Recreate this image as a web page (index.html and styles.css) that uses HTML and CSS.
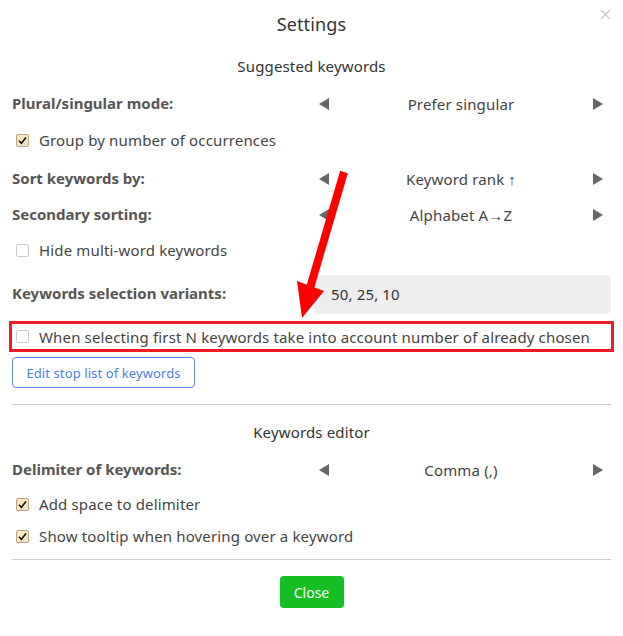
FILE: index.html
```html
<!DOCTYPE html>
<html lang="en">
<head>
    <meta charset="UTF-8">
    <meta name="viewport" content="width=device-width, initial-scale=1.0">
    <title>Settings</title>
    <link rel="stylesheet" href="styles.css">
</head>
<body>
    <div id="settings-modal">
        <div class="modal-header">
            <h1>Settings</h1>
            <span class="close-x">
                <svg width="11" height="11" viewBox="0 0 11 11"><path d="M1 1L10 10M10 1L1 10" stroke="#c8c8c8" stroke-width="1.4"/></svg>
            </span>
        </div>

        <h2 class="section-title">Suggested keywords</h2>

        <div class="select-row first">
            <span class="row-label">Plural/singular mode:</span>
            <div class="switcher">
                <svg class="tri" width="10" height="12" viewBox="0 0 10 12"><polygon points="10,0 10,12 0,6" fill="#666"/></svg>
                <span class="switcher-value">Prefer singular</span>
                <svg class="tri" width="10" height="12" viewBox="0 0 10 12"><polygon points="0,0 0,12 10,6" fill="#666"/></svg>
            </div>
        </div>

        <label class="check-row group-row">
            <span class="box checked"><svg width="9" height="9" viewBox="0 0 9 9"><path d="M1 4.8L3.4 7.2L8 1.6" stroke="#111" stroke-width="1.6" fill="none"/></svg></span>
            Group by number of occurrences
        </label>

        <div class="select-row sort-row">
            <span class="row-label">Sort keywords by:</span>
            <div class="switcher">
                <svg class="tri" width="10" height="12" viewBox="0 0 10 12"><polygon points="10,0 10,12 0,6" fill="#666"/></svg>
                <span class="switcher-value">Keyword rank ↑</span>
                <svg class="tri" width="10" height="12" viewBox="0 0 10 12"><polygon points="0,0 0,12 10,6" fill="#666"/></svg>
            </div>
        </div>

        <div class="select-row">
            <span class="row-label">Secondary sorting:</span>
            <div class="switcher">
                <svg class="tri" width="10" height="12" viewBox="0 0 10 12"><polygon points="10,0 10,12 0,6" fill="#666"/></svg>
                <span class="switcher-value">Alphabet A→Z</span>
                <svg class="tri" width="10" height="12" viewBox="0 0 10 12"><polygon points="0,0 0,12 10,6" fill="#666"/></svg>
            </div>
        </div>

        <label class="check-row hide-row">
            <span class="box"></span>
            Hide multi-word keywords
        </label>

        <div class="input-row">
            <span class="row-label">Keywords selection variants:</span>
            <div class="text-field">50, 25, 10</div>
        </div>

        <label class="check-row highlighted">
            <span class="box"></span>
            When selecting first N keywords take into account number of already chosen
        </label>

        <div class="stop-list">
            <button type="button" class="outline-btn">Edit stop list of keywords</button>
        </div>

        <hr class="divider">

        <h2 class="section-title editor-title">Keywords editor</h2>

        <div class="select-row first">
            <span class="row-label">Delimiter of keywords:</span>
            <div class="switcher">
                <svg class="tri" width="10" height="12" viewBox="0 0 10 12"><polygon points="10,0 10,12 0,6" fill="#666"/></svg>
                <span class="switcher-value">Comma (,)</span>
                <svg class="tri" width="10" height="12" viewBox="0 0 10 12"><polygon points="0,0 0,12 10,6" fill="#666"/></svg>
            </div>
        </div>

        <label class="check-row">
            <span class="box checked"><svg width="9" height="9" viewBox="0 0 9 9"><path d="M1 4.8L3.4 7.2L8 1.6" stroke="#111" stroke-width="1.6" fill="none"/></svg></span>
            Add space to delimiter
        </label>

        <label class="check-row">
            <span class="box checked"><svg width="9" height="9" viewBox="0 0 9 9"><path d="M1 4.8L3.4 7.2L8 1.6" stroke="#111" stroke-width="1.6" fill="none"/></svg></span>
            Show tooltip when hovering over a keyword
        </label>

        <hr class="divider bottom">

        <div class="modal-footer">
            <button type="button" class="close-btn">Close</button>
        </div>

        <!-- annotation arrow drawn over the dialog -->
        <svg class="annotation-arrow" width="623" height="636" viewBox="0 0 623 636">
            <line x1="344" y1="172" x2="310" y2="288" stroke="#ff0000" stroke-width="8"/>
            <polygon points="297,281 324,291 302,318" fill="#ff0000"/>
        </svg>
    </div>
</body>
</html>
```

FILE: styles.css
```css
body {
    margin: 0;
    padding: 0;
    background-color: #fff;
    font-family: 'Noto Sans', 'Open Sans', sans-serif;
    font-size: 15px;
    letter-spacing: 0.15px;
    color: #444;
}

#settings-modal {
    position: relative;
    width: 623px;
    height: 636px;
    padding: 0 12px;
    box-sizing: border-box;
    display: flex;
    flex-direction: column;
}

.modal-header {
    position: relative;
    height: 48px;
    display: flex;
    justify-content: center;
    align-items: center;
}

.modal-header h1 {
    margin: 0;
    font-size: 18px;
    font-weight: normal;
    color: #333;
}

.close-x {
    position: absolute;
    right: 0;
    top: 9px;
    display: flex;
}

.section-title {
    margin: 3px 0 0;
    height: 30px;
    line-height: 30px;
    text-align: center;
    font-size: 15px;
    font-weight: normal;
    color: #333;
}

.editor-title {
    margin-top: 12px;
}

.select-row,
.input-row {
    display: grid;
    grid-template-columns: 302px 1fr;
    align-items: center;
    height: 36px;
}

.select-row.first {
    margin-top: 5px;
}

.select-row.sort-row {
    margin-top: 5px;
}

.row-label {
    font-weight: bold;
    color: #555;
    letter-spacing: 0;
    margin-top: -3px;
}

.switcher {
    display: flex;
    align-items: center;
    justify-content: space-between;
    padding: 0 8px 0 5px;
}

.switcher-value {
    color: #444;
}

.tri {
    display: block;
}

.check-row {
    display: flex;
    align-items: center;
    height: 32px;
    padding-left: 4px;
    color: #444;
}

.group-row {
    margin-top: 2px;
}

.hide-row {
    margin-top: 1px;
}

.box {
    width: 11px;
    height: 11px;
    border: 1px solid #ccc;
    border-radius: 2px;
    background-color: #fff;
    margin-right: 10px;
    display: flex;
    align-items: center;
    justify-content: center;
    flex-shrink: 0;
}

.box.checked {
    background-color: #f5e7c6;
    border-color: #b9a680;
}

.input-row {
    height: 39px;
    margin-top: 9px;
}

.text-field {
    height: 39px;
    line-height: 39px;
    background-color: #eee;
    border-radius: 5px;
    padding-left: 17px;
    color: #333;
}

.highlighted {
    margin: 7px -3px 0;
    height: 25px;
    padding-left: 4px;
    border: 3px solid #ee1c25;
}

.stop-list {
    margin-top: 5px;
    display: flex;
}

.outline-btn {
    width: 183px;
    height: 31px;
    background-color: #fff;
    border: 1px solid #5b8def;
    border-radius: 4px;
    color: #4a7fe6;
    font-family: inherit;
    font-size: 13px;
    letter-spacing: 0.1px;
    padding: 0;
}

.divider {
    margin: 16px 0 0;
    border: none;
    border-top: 1px solid #ccc;
    height: 0;
}

.divider.bottom {
    margin-top: 7px;
}

.modal-footer {
    margin-top: 16px;
    display: flex;
    justify-content: center;
}

.close-btn {
    width: 64px;
    height: 32px;
    background-color: #13bf23;
    color: #fff;
    border: none;
    border-radius: 4px;
    font-family: inherit;
    font-size: 14px;
}

.annotation-arrow {
    position: absolute;
    left: 0;
    top: 0;
    pointer-events: none;
}
```
